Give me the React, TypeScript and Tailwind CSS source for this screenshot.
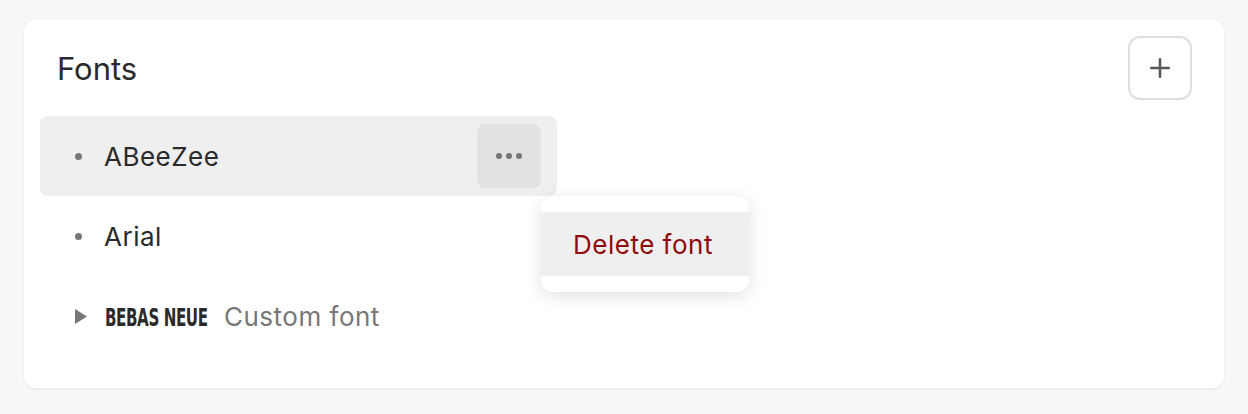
import { Plus } from "lucide-react";

const fonts = [
  { name: "ABeeZee", active: true },
  { name: "Arial", active: false },
];

export default function App() {
  return (
    <main className="min-h-screen bg-[#f7f7f7] px-6 pt-5 font-['Inter',sans-serif] text-[#2a2a2a]">
      <section className="rounded-xl bg-white px-4 pb-8 pt-4 shadow-[0_1px_3px_rgba(0,0,0,0.08)]">
        {/* Header */}
        <div className="flex items-center justify-between pl-[17px] pr-4">
          <h2 className="text-[31px] leading-none">Fonts</h2>
          <button className="flex h-16 w-16 items-center justify-center rounded-xl border-2 border-[#dedede] text-[#555]">
            <Plus size={30} strokeWidth={2} />
          </button>
        </div>

        {/* List */}
        <ul className="mt-4 w-[517px] text-[26px] tracking-[0.5px]">
          {fonts.map((f) => (
            <li
              key={f.name}
              className={`relative flex h-20 items-center rounded-lg pl-[35px] pr-4 ${f.active ? "bg-[#efefef]" : ""}`}
            >
              <span className="mr-[22px] h-[7px] w-[7px] rounded-full bg-[#777]" />
              <span className="flex-1">{f.name}</span>
              {f.active && (
                <>
                  <span className="flex h-16 w-16 items-center justify-center gap-[4px] rounded-lg bg-[#e2e2e2]">
                    <i className="h-[6px] w-[6px] rounded-full bg-[#777]" />
                    <i className="h-[6px] w-[6px] rounded-full bg-[#777]" />
                    <i className="h-[6px] w-[6px] rounded-full bg-[#777]" />
                  </span>
                  {/* Dropdown menu */}
                  <div className="absolute left-[501px] top-20 z-10 w-52 rounded-xl bg-white py-4 shadow-[0_4px_18px_rgba(0,0,0,0.12)]">
                    <div className="flex h-16 items-center bg-[#efefef] px-8 text-[#8f0a0a]">
                      Delete font
                    </div>
                  </div>
                </>
              )}
            </li>
          ))}
          <li className="flex h-20 items-center pl-[35px]">
            <svg width="12" height="15" viewBox="0 0 12 15" className="mr-[18px]">
              <path d="M0 0 L12 7.5 L0 15 Z" fill="#777" />
            </svg>
            <span className="inline-block w-[102px] whitespace-nowrap">
              <span className="inline-block origin-left scale-x-[0.7] font-['DejaVu_Sans',sans-serif] text-[24px] font-bold uppercase tracking-tight font-stretch-condensed">
                Bebas Neue
              </span>
            </span>
            <span className="ml-[17px] text-[#777]">Custom font</span>
          </li>
        </ul>
      </section>
    </main>
  );
}
